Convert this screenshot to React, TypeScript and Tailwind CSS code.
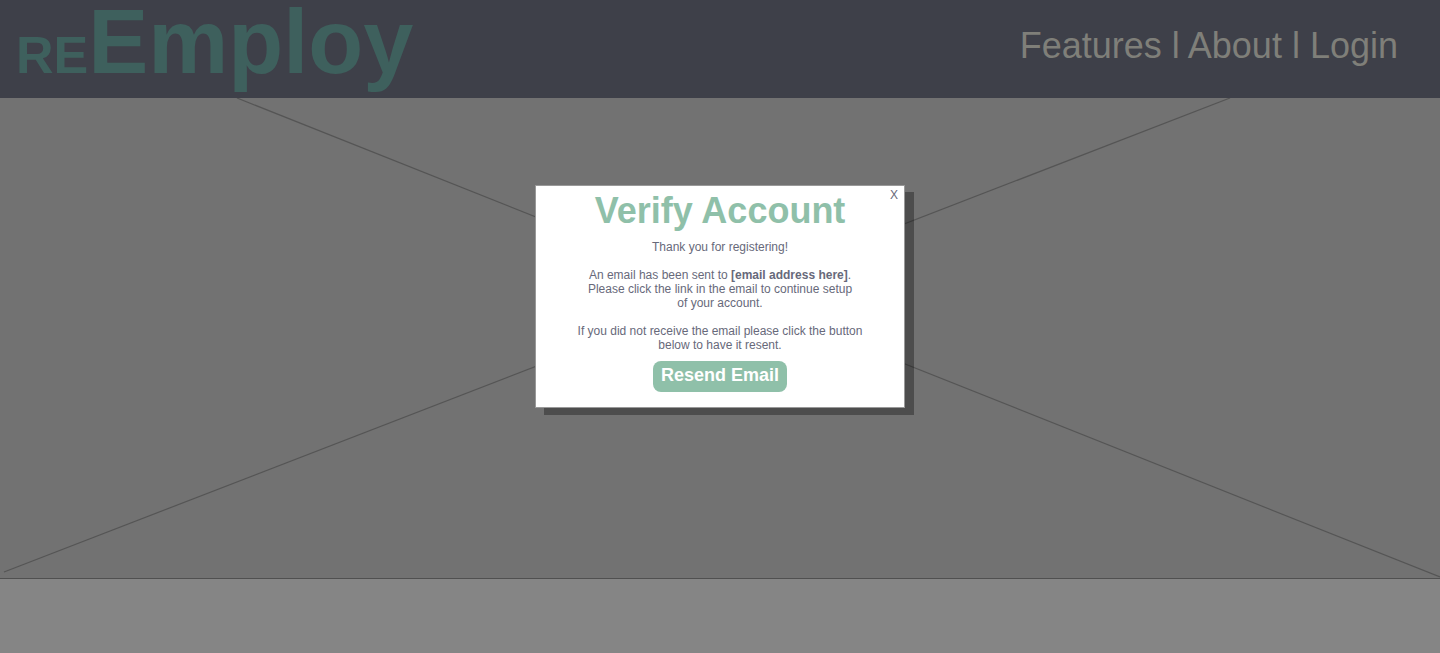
import { useState } from "react";

function Header() {
  return (
    <header className="flex h-[98px] items-start justify-between bg-[#3e4049] pr-[42px] pl-4">
      <a href="#home" aria-label="REEmploy" className="flex items-baseline font-bold text-[#3e605d]">
        <span className="text-[52px] leading-none">RE</span>
        <span className="text-[90px] leading-[84px]">Employ</span>
      </a>
      <nav className="pt-[26px] text-4xl whitespace-pre text-[#7f7f79]">
        <a href="#features">Features</a> l <a href="#about">About</a> l <a href="#login">Login</a>
      </nav>
    </header>
  );
}

function HeroPlaceholder() {
  return (
    <section className="border-b border-[#505050] bg-[#727272]">
      <svg
        className="block h-[480px] w-full"
        viewBox="0 0 1440 480"
        preserveAspectRatio="none"
        fill="none"
        stroke="#555555"
        strokeWidth="1.2"
        aria-hidden="true"
      >
        <path d="M237 0 1440 479M4 474 1230 0" />
      </svg>
    </section>
  );
}

function VerifyDialog({ onClose }: { onClose: () => void }) {
  return (
    <div
      role="dialog"
      aria-labelledby="verify-title"
      className="relative flex w-[370px] flex-col items-center border border-[#999999] bg-white px-10 pt-1 pb-[15px] text-center text-xs leading-[14px] text-[#67697a] shadow-[9px_7px_0_rgba(0,0,0,0.32)]"
    >
      <button type="button" aria-label="X" onClick={onClose} className="absolute top-0.5 right-1.5">
        X
      </button>
      <h1 id="verify-title" className="text-4xl leading-[42px] font-bold text-[#8fc0a9]">
        Verify Account
      </h1>
      <p className="mt-2">Thank you for registering!</p>
      <p className="mt-3.5">
        An email has been sent to <b>[email address here]</b>.<br />
        Please click the link in the email to continue setup
        <br />
        of your account.
      </p>
      <p className="mt-3.5">If you did not receive the email please click the button below to have it resent.</p>
      <button
        type="button"
        className="mt-[9px] rounded-lg bg-[#8fc0a9] px-2 pt-1 pb-[7px] text-lg leading-5 font-bold text-white"
      >
        Resend Email
      </button>
    </div>
  );
}

export default function App() {
  const [open, setOpen] = useState(true);
  return (
    <div className="relative min-h-screen bg-[#858585] font-['Liberation_Sans',Arial,sans-serif]">
      <Header />
      <HeroPlaceholder />
      {open && (
        <div className="absolute inset-0 flex items-start justify-center pt-[185px]">
          <VerifyDialog onClose={() => setOpen(false)} />
        </div>
      )}
    </div>
  );
}
